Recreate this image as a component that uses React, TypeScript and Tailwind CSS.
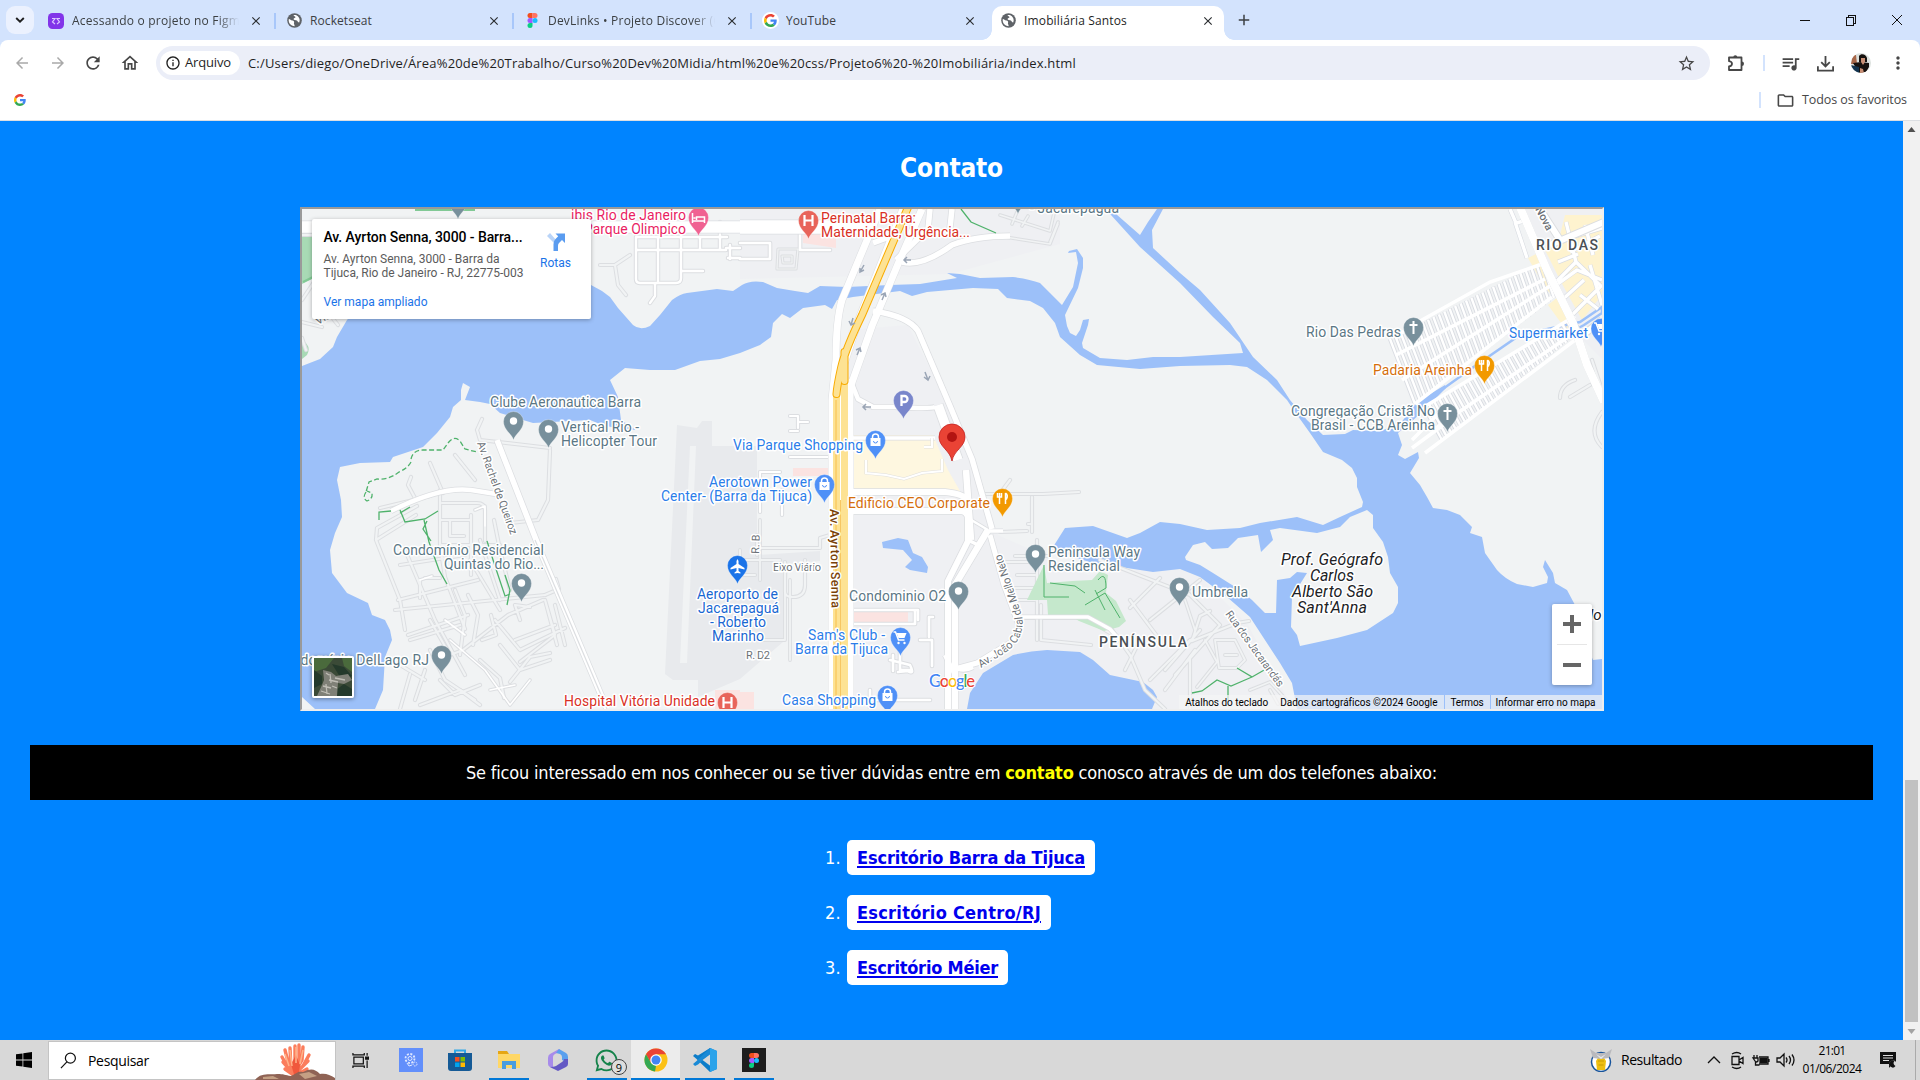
import React, { useLayoutEffect, useRef } from "react";
import {
  MdArrowBack, MdArrowForward, MdRefresh, MdOutlineHome, MdStarBorder,
  MdQueueMusic, MdMoreVert, MdOutlineFolder, MdInfoOutline, MdClose, MdAdd,
} from "react-icons/md";
import { FaWhatsapp } from "react-icons/fa";

/* Text whose letter spacing is tuned so that it spans exactly w pixels. */
function Fit({ w, className = "", children }: { w: number; className?: string; children: React.ReactNode }) {
  const ref = useRef<HTMLSpanElement>(null);
  useLayoutEffect(() => {
    const el = ref.current;
    if (!el) return;
    el.style.letterSpacing = "0px";
    const n = (el.textContent || "").length;
    el.style.letterSpacing = `${(w - el.getBoundingClientRect().width) / n}px`;
  }, [w]);
  return <span ref={ref} className={`inline-block whitespace-nowrap ${className}`}>{children}</span>;
}

const GoogleG = ({ className }: { className: string }) => (
  <svg viewBox="0 0 48 48" className={className}>
    <path fill="#EA4335" d="M24 9.5c3.54 0 6.71 1.22 9.21 3.6l6.85-6.85C35.9 2.38 30.47 0 24 0 14.62 0 6.51 5.38 2.56 13.22l7.98 6.19C12.43 13.72 17.74 9.5 24 9.5z" />
    <path fill="#4285F4" d="M46.98 24.55c0-1.57-.15-3.09-.38-4.55H24v9.02h12.94c-.58 2.96-2.26 5.48-4.78 7.18l7.73 6c4.51-4.18 7.09-10.36 7.09-17.65z" />
    <path fill="#FBBC05" d="M10.53 28.59c-.48-1.45-.76-2.99-.76-4.59s.27-3.14.76-4.59l-7.98-6.19C.92 16.46 0 20.12 0 24c0 3.88.92 7.54 2.56 10.78l7.97-6.19z" />
    <path fill="#34A853" d="M24 48c6.48 0 11.93-2.13 15.89-5.81l-7.73-6c-2.15 1.45-4.92 2.3-8.16 2.3-6.26 0-11.57-4.22-13.47-9.91l-7.98 6.19C6.51 42.62 14.62 48 24 48z" />
  </svg>
);

const FigmaLogo = ({ className }: { className: string }) => (
  <svg viewBox="0 0 12 18" className={className}>
    <path fill="#f24e1e" d="M3 0h3v6H3a3 3 0 0 1 0-6z" />
    <path fill="#ff7262" d="M6 0h3a3 3 0 0 1 0 6H6z" />
    <path fill="#a259ff" d="M3 6h3v6H3a3 3 0 0 1 0-6z" />
    <circle fill="#1abcfe" cx="9" cy="9" r="3" />
    <path fill="#0acf83" d="M3 12h3v3a3 3 0 1 1-3-3z" />
  </svg>
);

const Rocket = () => (
  <svg viewBox="0 0 16 16" className="size-4">
    <rect width="16" height="16" rx="4.500" fill="#8234e9" />
    <path d="M4 5.500h3L4.500 9l2.500 2M12 5.500H9L11.500 9 9 11" fill="none" stroke="#dcc8ff" strokeWidth="1.200" />
  </svg>
);

const Globe = () => (
  <svg viewBox="0 0 16 16" className="size-[15px]">
    <circle cx="8" cy="8" r="7.800" fill="#5f6368" />
    <path d="M2 6.500c1.500 0 2 1.500 3.500 1.500S8 9 7.500 10.500 8.500 12 8 14a6 6 0 0 1-6-7.500zM7 2.200c0 1.500 2 1 2 2.300S7 5 7 6.500s2.500 1 3.500 1.500 1 2 2.500 2.200A6 6 0 0 0 9.500 2.200z" fill="#fff" />
  </svg>
);

type TabInfo = { title: string; w: number; icon: React.ReactNode; active?: boolean; fade?: boolean; sep?: boolean };
const tabs: TabInfo[] = [
  { title: "Acessando o projeto no Figma", w: 175, icon: <Rocket />, fade: true, sep: true },
  { title: "Rocketseat", w: 62, icon: <Globe />, sep: true },
  { title: "DevLinks • Projeto Discover (C", w: 173, icon: <FigmaLogo className="h-[15px] w-[11px]" />, fade: true, sep: true },
  { title: "YouTube", w: 50, icon: <span className="flex size-[17px] items-center justify-center rounded-full bg-white"><GoogleG className="size-[13px]" /></span> },
  { title: "Imobiliária Santos", w: 103, icon: <Globe />, active: true },
];

function Tab({ t }: { t: TabInfo }) {
  return (
    <div className={`relative flex h-[34px] items-center pb-[6px] ${t.active ? "ml-[2px] w-[232px] rounded-t-[10px] bg-white pt-px" : "w-[238px] pt-px"}`}>
      {t.active && (
        <>
          <span className="absolute bottom-0 -left-[10px] size-[10px] bg-[radial-gradient(circle_at_0_0,transparent_9.5px,#fff_10px)]" />
          <span className="absolute -right-[10px] bottom-0 size-[10px] bg-[radial-gradient(circle_at_100%_0,transparent_9.5px,#fff_10px)]" />
        </>
      )}
      <span className={`flex w-[18px] shrink-0 justify-center ${t.active ? "ml-[7px]" : "ml-[9px]"}`}>{t.icon}</span>
      <span className={`ml-[7px] w-[167px] shrink-0 overflow-hidden text-[12px] leading-[20px] ${t.active ? "text-[#1f1f1f]" : "text-[#3c4043]"} ${t.fade ? "[mask-image:linear-gradient(90deg,#000_145px,transparent_167px)]" : ""}`}>
        <Fit w={t.w}>{t.title}</Fit>
      </span>
      <MdClose className="ml-[10px] size-[14px] shrink-0 text-[#2b2e31]" />
      {t.sep && <span className="ml-[11px] h-4 w-[2px] shrink-0 bg-[#a8c7fa]" />}
    </div>
  );
}

function Chrome() {
  return (
    <header className="h-[121px] bg-[#d3e3fd] font-['Open_Sans',sans-serif]">
      <div className="flex h-10 items-end">
        <div className="mb-[6px] ml-[6px] flex h-7 w-7 items-center justify-center rounded-[9px] bg-[#ebf1fe]">
          <svg viewBox="0 0 10 6" className="h-[6px] w-[10px]"><path d="M1.200 1l3.800 3.600L8.800 1" fill="none" stroke="#1f1f1f" strokeWidth="1.900" /></svg>
        </div>
        <div className="w-1" />
        {tabs.map((t) => <Tab key={t.title} t={t} />)}
        <MdAdd className="mb-[11px] ml-[11px] size-[18px] text-[#3c4043]" />
        <div className="flex-1" />
        <svg className="mr-[16px] mb-[12px] h-[16px] w-[104px]" viewBox="0 0 104 16" fill="none" stroke="#111" shapeRendering="crispEdges">
          <path d="M0 8.500h10M46.500 5.500h7v8h-7zM48.500 5.500v-2h7v8h-2" />
          <path d="M92 3l10 10M102 3l-10 10" shapeRendering="auto" />
        </svg>
      </div>
      <div className="flex h-[81px] flex-col rounded-t-[8px] border-b border-[#dcdfe3] bg-white">
        <div className="flex h-[46px] items-center text-[#474747]">
          <MdArrowBack className="ml-[13px] size-[18px] text-[#a9a9a9]" />
          <MdArrowForward className="ml-[18px] size-[18px] text-[#a9a9a9]" />
          <MdRefresh className="ml-[16px] size-[20px]" />
          <MdOutlineHome className="ml-[17px] size-[20px]" />
          <div className="ml-4 flex h-[34px] w-[1554px] items-center rounded-full bg-[#ebeef8] pl-[4px]">
            <div className="flex h-6 w-[80px] items-center rounded-full bg-white pl-[5px] text-[13px] text-[#1f1f1f]">
              <MdInfoOutline className="mr-[4px] size-4" />
              <Fit w={46}>Arquivo</Fit>
            </div>
            <Fit w={828} className="ml-[8px] text-[13px] leading-5 text-[#1f1f1f]">
              C:/Users/diego/OneDrive/Área%20de%20Trabalho/Curso%20Dev%20Midia/html%20e%20css/Projeto6%20-%20Imobiliária/index.html
            </Fit>
            <div className="flex-1" />
            <MdStarBorder className="mr-[14px] size-[19px]" />
          </div>
          <svg viewBox="0 0 18 18" className="ml-[17px] size-[18px]" fill="none" stroke="currentColor" strokeWidth="1.800" strokeLinejoin="round">
            <path d="M2 3.500h12.500v12.500H2v-3.500q3-.5 3-2.700T2 7.200z" />
            <path d="M6.300 3.300a2 2 0 0 1 4 0zM14.800 7.500a2.200 2.200 0 0 1 0 4.400z" fill="currentColor" stroke="none" />
          </svg>
          <span className="ml-[18px] h-4 w-[2px] bg-[#d3e3fd]" />
          <MdQueueMusic className="ml-[15px] size-[21px]" />
          <svg viewBox="0 0 20 20" className="ml-[15px] size-[19px]" fill="none" stroke="currentColor" strokeWidth="1.900">
            <path d="M10 2v11M5.500 8.500l4.500 4.500 4.500-4.500M2 13v4.500h16V13" />
          </svg>
          <svg viewBox="0 0 20 20" className="ml-[16px] size-5">
            <clipPath id="av"><circle cx="10" cy="10" r="10" /></clipPath>
            <g clipPath="url(#av)">
              <path fill="#dde2df" d="M0 0h20v20H0z" />
              <path fill="#a8684a" d="M1 2h4l1 9H0z" />
              <path fill="#17120f" d="M8 3c2-3 7-2 8 2v4H8zM2 10l8-1 8 1v4l-3 5-7 1z" />
              <path fill="#c98f75" d="M10 5h4v4l-2 3-2-3zM9 15l3 1 1 4H9z" />
              <path fill="#123450" d="M0 12l8 2v6H0z" />
            </g>
          </svg>
          <MdMoreVert className="ml-[17px] size-[20px]" />
        </div>
        <div className="flex flex-1 items-center pb-[6px]">
          <GoogleG className="ml-[14px] size-[12px]" />
          <div className="flex-1" />
          <span className="h-4 w-[2px] bg-[#d3e3fd]" />
          <MdOutlineFolder className="ml-[15px] size-[19px] text-[#474747]" />
          <Fit w={105} className="mr-[13px] ml-[7px] text-[12.500px] text-[#474747]">Todos os favoritos</Fit>
        </div>
      </div>
    </header>
  );
}

/* ---------- map ---------- */

const waterMain =
  "M302 366L320 359 333 347 337 337 347 320 380 285 420 262 500 265 560 262 591 285 602 291 610 297 618 308 633 325Q640 331 650 326L660 315 672 300Q680 294 687 293L717 289 733 291 742 285Q750 280 763 282L777 288 795 291 808 293 820 286 847 287 890 285 920 284 957 278 947 273 960 274 980 278 1013 277Q1030 279 1040 283L1050 293 1062 305 1073 287 1078 263 1076 252 1068 253 1069 251 1077 249 1083 258 1083 268 1078 288 1065 315 1067 326 1070 333 1076 336 1080 330 1083 320 1089 319 1088 325 1082 343 1083 348 1100 358 1127 360 1153 357 1180 357 1243 353 1240 343 1213 317 1180 283 1140 247 1111 215 1100 209 1116 214 1140 235 1148 222 1157 209 1163 209 1152 230 1153 248 1180 273 1200 290 1230 323 1253 357 1277 380 1290 400 1307 420 1323 435 1345 434 1353 430 1380 431 1400 424 1417 402 1445 385 1446 388 1424 410 1410 423 1398 433 1402 445 1398 455 1405 459 1418 452 1419 458 1410 473 1420 485 1427 497 1433 508 1447 510 1460 515 1472 527 1470 533 1482 537 1485 553 1497 570Q1505 579 1517 584L1533 587 1547 583 1548 577 1543 567 1545 560 1553 573 1555 583 1567 590 1575 605 1580 630 1593 660 1602 659V709H1297L1292 683 1280 663 1263 637 1250 617 1227 597 1200 577 1180 569 1153 572 1127 568 1093 563 1073 557 1053 547 1065 528 1093 526 1127 538 1140 533 1160 522 1180 524 1207 530 1240 528 1260 523 1297 517 1323 525 1340 517 1362 507 1363 502 1357 487 1357 478 1352 468 1342 460 1323 452 1310 433 1295 412 1287 400 1267 380 1247 367 1230 365 1180 366 1140 369 1097 365 1080 355 1060 337 1055 323 1043 308 1030 301 1007 298 998 289 973 288 927 292 912 296 900 291 853 297 837 300 832 309 825 305 803 308 790 318 782 314 773 323 771 337 760 345 740 353 720 359 700 361 675 370 650 370 625 368 610 380 618 397 621 420 636 430 625 429 605 426 590 420 533 423 500 413 490 404 480 402 465 400 470 387 463 383 461 390 461 400 453 407 450 417 437 433 423 447 393 457 390 462 360 463 340 467 337 480 341 500 342 517 335 533 330 550 332 573 347 593 368 603 372 615 385 620 390 630 392 640 385 657 383 690 375 709H315L302 697Z";
const island =
  "M1185 557L1193 545 1205 542 1212 549 1228 548 1238 538 1258 535 1261 552 1273 540 1270 530 1280 528 1317 533 1340 527 1350 517 1367 510 1373 515 1373 528 1383 542 1388 557 1390 573 1398 587 1398 603 1393 613 1367 630 1337 638 1300 646 1297 635 1291 627 1292 597 1307 573 1297 572 1290 578 1277 580 1276 613 1265 613 1252 600 1240 590 1213 573 1200 565 1186 560Z";

/* minor streets as [path, width, fill] */
const W = "#fff";
const G = "#f1f3f4";
const minor: [string, number, string][] = [
  ["M600 265h15l15-10M615 265l3 20 8 10M477 430l5-11M477 430l3 10 70 8M550 450l-2 50-10 20-28 3", 3, G],
  ["M636 237v42q0 4 4 4h36q5 0 5-5v-55M658 237v44M681 250h45M637 250h44M637 237h90M700 237v13M720 222v28M681 271h22M655 284v12l-5 7M726 248h14M728 258h12M730 245v14", 3.2, W],
  ["M778 249h20l-2 20h-19zM782 256h10v7h-9z", 2, G],
  ["M800 220v30h30M740 243h30v16h-30", 3.4, W],
  ["M1000 215l50 16 5-22M1050 242l8-20M1017 212l-5 12M1028 216l-6 10M1005 237l45 7 8-20", 2.4, G],
  ["M455 455l20 25M430 463l13 30M380 508l50-12M416 500l-8-15 3-8", 3, G],
  ["M376 540l40-25M440 490v55l5 32 20 52M376 540l24 60 5 30M376 540l1-12 40-22M442 503h35q8 0 8 8v30M440 520h30M440 545h60M471 515v60M450 521v15h14M494 520l5 25M405 550l30 70 30 55", 3, G],
  ["M395 610l150-15M398 600l80-20M408 635l60-20M400 565l65-10M470 560l30 50M455 590l10 25-5 40M480 540l20 60M500 550l10 40M420 580v18M425 578h15M430 620l20 35M410 640l50-15M430 650l15 30 30 20", 3, G],
  ["M450 655l13-5 45-35 35-15M468 595l10 20-5 30M482 640l14-5-5-20M520 620l-5-15 15 2M480 660l20 18 4 20M495 620l25 30 45-22M500 645l20 25 30-10M515 640l40-15M510 682l20-25 20-4M400 665l25 15M415 700l10-30M440 680l15 15 25-10M420 705l40-15 20 15M400 709l10-35M545 600l10 35-35 27M545 600l12 45M545 595l14-6-3-10M555 605l10 40", 3, G],
  ["M475 510l10-4v20M450 640l35 30 25 35 20-25M445 620l20 15M420 580l12-4M490 690l25-5", 2.4, W],
  ["M302 235h60M302 300l30-45M302 322l20 5M306 350l-4-12M330 315l8 10", 3, G],
  ["M790 416h8v12M798 422h10M790 431h8M790 457h40M780 472h-20v40M782 490v25", 3, W],
  ["M760 548h60M745 560h35M755 575h-15M757 535v20M785 562v30q0 5 8 5 12 0 12-12v-25M820 548v-10l10-3", 3, G],
  ["M760 520v60M740 550v25M740 640h45v-70M790 660v-80", 2.6, G],
  ["M850 610h68v10M850 624h65v-14M900 640v30h10M920 640h12v26M933 617h-4v20M890 660l20 5q5 10-2 6l-10 1M850 700h80M870 690v18M893 655v16", 3.4, W],
  ["M985 494h58l36-2M1010 480l-12 16M1032 497v35M1030 524h-2M1000 532l27-1M1015 556h35M1000 562h35M1037 540v100M1035 575h-18M1035 588h-20M1035 600h-18M1020 618h65l25 15M1041 605v35l50 5M1085 615l20 5 25 35 15 35 20 19", 3, G],
  ["M1100 560l90 35M1160 578l-30 30M1180 585l40 40-45 50M1130 600l30 40M1150 620l50-40M1140 640l-15 30M1165 670l35-40M1192 641l45-18 12-2M1192 641l8-25 10-5M1150 680l40-40M1165 690l30-40M1190 709v-50", 3, G],
  ["M1185 600l10 30M1205 640l12 22-20 25M1215 640h20l10 20-8 8h-18zM1225 655h12M1250 690l20-8 20 22M1270 690l8 14", 2.6, G],
  ["M1575 380q-15 5-15 18M1570 397l20-12M1602 412q-15 20 0 35M1592 360l10 30", 3, G],
];

const major: [string, number][] = [
  ["M302 227H740", 12],
  ["M740 227H870", 14],
  ["M497 440l45 115 65 154", 6],
  ["M391 511q50-25 80-21l25 4", 5],
  ["M952 209l-3 28M930 209l-2 20-32 31M873 243l27-10", 6],
  ["M1010 236q-35 0-58 9-30 22-50 17", 6],
  ["M873 311q35 5 45 20l32 75 22 53 20 70", 6],
  ["M935 407q-5 2-40 0h-22l-15-8-8-20", 5],
  ["M938 405l20 55", 10],
  ["M850 492h95q20 2 25 10M850 511h110q8 0 8 8v22l-20 40v128", 6.5],
  ["M966 470l5 70M988 530l-33 55v124", 7],
  ["M968 540l10 5 8-10M988 531l15 0M850 438h85M848 432v12", 4],
  ["M968 518l20 12", 3],
  ["M990 535l14 50 14 38q2 10-5 18l-36 22-22 6", 5.500],
  ["M953 665q8 8 20 2M945 655l10 20", 5],
  ["M1018 617h70l22 12 16 18", 4],
];

const highwaySides =
  "M880 209L842 300q-6 20-6 60l-4 40v310M922 209l-24 55-26 62-22 62v320M903 209l-44 110-20 60";

const park = "M1044 565l3 18 25-2 20-1 8-9 8 4-2 18 10 8 10 20-7 6-15 4-25-10-10-6h-21l-1-15h-20z";
const marketStreets = "M1566 222l10 40-20 20M1576 262l26 25M1562 240l40-12M1570 252l30-16M1558 262l20-8M1552 288l25-18 25 10M1562 300l22-20M1585 225l8 30M1572 315l30-30M1590 265l12 40M1580 295l18 14";

type Kind = "dot" | "cross" | "bag" | "cart" | "fork" | "H" | "P" | "plane" | "bed";
const pins: [number, number, string, Kind][] = [
  [458, 219, "#78909c", "dot"], [698.5, 236, "#f06292", "bed"], [808.5, 239, "#e8645a", "H"], [1018, 214, "#78909c", "dot"],
  [513.5, 440, "#78909c", "dot"], [548.5, 448, "#78909c", "dot"], [903.5, 419, "#7986cb", "P"], [875.5, 459, "#4f90f7", "bag"],
  [824.5, 503, "#4f90f7", "bag"], [1002.5, 517, "#f29900", "fork"], [737.5, 584, "#1a73e8", "plane"], [521.5, 602, "#78909c", "dot"],
  [441.5, 674, "#78909c", "dot"], [1035.5, 573, "#78909c", "dot"], [958.5, 610, "#78909c", "dot"], [1179.5, 606, "#78909c", "dot"],
  [900.5, 656, "#4f90f7", "cart"], [887.5, 714, "#4f90f7", "bag"], [727.5, 721, "#e8645a", "H"], [1413.5, 346, "#78909c", "cross"],
  [1484.5, 384, "#f29900", "fork"], [1447.5, 432, "#78909c", "cross"], [1601, 347, "#4f90f7", "cart"],
];

function Glyph({ k }: { k: Kind }) {
  const s = { fill: "none", stroke: "#fff", strokeWidth: 1.5 } as const;
  switch (k) {
    case "dot": return <circle cy="-19" r="3.700" fill="#fff" />;
    case "cross": return <path d="M0-25v13M-4-21h8" {...s} strokeWidth={2} />;
    case "bag": return <><path d="M-5-21H5v8H-5z" fill="#fff" /><path d="M-3-21v-1a3 3 0 0 1 6 0v1" {...s} /><path d="M-2-18a2 2 0 0 0 4 0" fill="none" stroke="#4f90f7" /></>;
    case "cart": return <><path d="M-7-24h2l3 8h6" {...s} /><path d="M-4-23H6l-2 5h-6z" fill="#fff" /><circle cx="-2" cy="-13" r="1.200" fill="#fff" /><circle cx="4" cy="-13" r="1.200" fill="#fff" /></>;
    case "fork": return <path d="M-3-24v11M-5-24v4h4v-4M3-24v11M3-24q3 2 1 6H3" {...s} />;
    case "H": return <path d="M-4-24v11M4-24v11M-4-18.500H4" {...s} strokeWidth={2.200} />;
    case "P": return <path d="M-2-13v-10H1a2.700 2.700 0 0 1 0 6H-2" {...s} strokeWidth={2.300} />;
    case "plane": return <path d="M0-25l1 2v3l6 4v1.500L1-16v3l2 1.500v1L0-11l-3 .5v-1L-1-13v-3l-6 1.500V-16l6-4v-3z" fill="#fff" />;
    case "bed": return <path d="M-6-23v10M-6-15H6M6-13v-6H-2v3M-5-18h2" {...s} />;
  }
}

const slate = "#5b7785";
const blue = "#2b7de9";
/* text, left, baseline, width, colour, size */
const labels: [string, number, number, number, string, number?][] = [
  ["Clube Aeronautica Barra", 490, 407, 151, slate],
  ["Vertical Rio -", 561, 432, 78, slate], ["Helicopter Tour", 561, 446, 96, slate],
  ["Perinatal Barra:", 821, 223, 95, "#d93025"], ["Maternidade, Urgência...", 821, 237, 149, "#d93025"],
  ["ibis Rio de Janeiro", 571, 220, 115, "#e91e63"], ["Parque Olimpico", 584, 234, 102, "#e91e63"],
  ["- Jacarepaguá", 1030, 213, 89, slate],
  ["Rio Das Pedras", 1306, 337, 95, slate], ["Supermarket", 1509, 338, 79, blue],
  ["Padaria Areinha", 1373, 375, 99, "#d56e0c"],
  ["Congregação Cristã No", 1291, 416, 144, slate], ["Brasil - CCB Areinha", 1311, 430, 124, slate],
  ["Via Parque Shopping", 733, 450, 130, blue],
  ["Aerotown Power", 709, 487, 103, blue], ["Center- (Barra da Tijuca)", 661, 501, 151, blue],
  ["Edificio CEO Corporate", 848, 508, 142, "#d56e0c"],
  ["Condomínio Residencial", 393, 555, 151, slate], ["Quintas do Rio...", 444, 569, 100, slate],
  ["Condomínio DelLago RJ", 275, 665, 154, slate],
  ["Aeroporto de", 697, 599, 81, "#1967d2"], ["Jacarepaguá", 698, 613, 81, "#1967d2"], ["- Roberto", 710, 627, 56, "#1967d2"], ["Marinho", 712, 641, 52, "#1967d2"],
  ["Condominio O2", 849, 601, 97, slate],
  ["Sam's Club -", 808, 640, 77, blue], ["Barra da Tijuca", 795, 654, 93, blue],
  ["Casa Shopping", 782, 705, 94, blue], ["Hospital Vitória Unidade", 564, 706, 151, "#d93025"],
  ["Peninsula Way", 1048, 557, 92, slate], ["Residencial", 1048, 571, 72, slate], ["Umbrella", 1192, 597, 56, slate],
  ["Eixo Viário", 773, 571, 48, "#6b7177", 11], ["R. D2", 746, 659, 24, "#6b7177", 11],
];

const lerp = (a: number[], b: number[], t: number) => [a[0] + (b[0] - a[0]) * t, a[1] + (b[1] - a[1]) * t];
function hatch(a: number[], b: number[], c: number[], d: number[], n: number) {
  let out = "";
  for (let i = 0; i <= n; i++) {
    const p = lerp(a, b, i / n), q = lerp(c, d, i / n);
    out += `M${p[0].toFixed(1)} ${p[1].toFixed(1)}L${q[0].toFixed(1)} ${q[1].toFixed(1)}`;
  }
  return out;
}
const gridUpper = hatch([1390, 339], [1542, 262], [1415, 404], [1554, 298], 28);
const gridLower = hatch([1424, 407], [1572, 318], [1442, 440], [1580, 332], 30);

function MapArt() {
  return (
    <svg viewBox="302 209 1300 500" className="absolute inset-0 h-[500px] w-[1300px] font-[Roboto,sans-serif]">
      <rect x="302" y="209" width="1300" height="500" fill="#f1f3f4" />
      <path d="M740 209h320v35l-110 30-210 5zM848 330l60-5 60 120 30 90 90 40 100-10 60 60 45 84H848zM1520 209h82v150l-30-30z" fill="#eff0f3" />
      <path d="M677 425l20 3 5-7h10v25h45v109l63-4v10l-32 3-5 78-43 37-42 18v-17h-25l-8-6z" fill="#e8eaed" />
      <path d="M690 446h6l-9 217h-7z" fill="#f1f3f4" />
      <path d="M302 229h10v50l-10 5zM302 340q10 6 5 15l-5 4z" fill="#a8dab5" />
      <path d="M303 282l10-5M415 210h60" stroke="#81c995" strokeWidth="2" />
      <path d="M848 435h85l15 35 12 21H855l-7-8z" fill="#fef7e0" />
      <path d="M1528 258l10-5 12 20 5 25-10-10zM1565 215l37 0v80l-20 25-22-40-15-30 15-15zM1548 305l10-8 18 35-12-5z" fill="#fef3cf" />
      <path d="M803 230h33v18l-33-5zM793 468h35v8h-35zM848 612h60v12h-60zM740 692h14v17h-14zM715 690h25v19h-25z" fill="#fbe3e1" />
      <path d={waterMain} fill="#9cc0f9" />
      <path d={island} fill="#f1f3f4" />
      <path d="M967 709L970 693 983 673 1013 655Q1030 651 1047 650L1080 652 1093 660 1110 675 1143 682 1153 690 1157 697 1152 709Z" fill="#9cc0f9" />
      <path d="M882 542L898 538 908 540 913 553 922 557 928 567 927 573 910 570 905 567 912 560 903 550 883 548Z" fill="#9cc0f9" />
      <path d="M1440 391L1475 366 1520 335 1580 322 1602 307V313L1584 325 1560 338" fill="none" stroke="#9cc0f9" strokeWidth="2.500" />

      {minor.map(([d, w], i) => <path key={i} d={d} fill="none" stroke="#dcdee1" strokeWidth={w + 1.200} strokeLinecap="round" strokeLinejoin="round" />)}
      {minor.map(([d, w, c], i) => <path key={i} d={d} fill="none" stroke={c} strokeWidth={w - 0.800} strokeLinecap="round" strokeLinejoin="round" />)}
      <path d={park} fill="#c5e8cc" />
      <path d="M1044 565v32h25M1050 583l25 3 10 7M1085 605l20-12 15 25M1095 590l10 20M1098 580q8-10 8 8l-10 6" fill="none" stroke="#4fb26b" />

      <path d={gridUpper + gridLower} stroke="#d9dce2" strokeWidth="4.200" />
      <path d={gridUpper + gridLower} stroke="#fff" strokeWidth="2.400" />
      <path d="M1395 337L1422 320 1490 282 1542 264M1396 355L1545 279M1402 380L1550 286M1415 404L1552 297M1424 407L1575 316M1433 430L1578 330M1425 453L1583 334M1412 440L1440 412M1412 448L1450 420" fill="none" stroke="#fff" strokeWidth="3.500" />

      <path d={marketStreets + "M1515 222l12 36M1510 209l6 14 8-2"} fill="none" stroke="#d9dce2" strokeWidth="4.600" strokeLinejoin="round" />
      <path d={marketStreets + "M1515 222l12 36M1510 209l6 14 8-2"} fill="none" stroke="#fff" strokeWidth="3.400" strokeLinejoin="round" />
      <path d="M1519 205L1547 270 1573 323 1587 365 1604 402M1560 240L1540 209M1550 245L1604 222M1583 335l19-15" fill="none" stroke="#dcdee1" strokeWidth="8" />
      <path d="M1519 205L1547 270 1573 323 1587 365 1604 402" fill="none" stroke="#fff" strokeWidth="8" />
      <path d="M1560 240L1540 209M1550 245L1604 222M1583 335l19-15" fill="none" stroke="#fff" strokeWidth="6" />

      {major.map(([d, w], i) => <path key={i} d={d} fill="none" stroke="#dcdee1" strokeWidth={w + 1} strokeLinejoin="round" />)}
      <path d={highwaySides} fill="none" stroke="#dcdee1" strokeWidth="8" />
      {major.map(([d, w], i) => <path key={i} d={d} fill="none" stroke="#fff" strokeWidth={w - 0.500} strokeLinejoin="round" />)}
      <path d={highwaySides} fill="none" stroke="#fff" strokeWidth="7" />
      <path d="M535 540l72 169" stroke="#dcdee1" strokeWidth="1.200" />
      <path d="M866 460v13l20 2 18 4 18-6 20-2v-12M932 438v9h-8M848 492h0" fill="none" stroke="#e0dfdc" strokeWidth="3" />
      <path d="M866 460v13l20 2 18 4 18-6 20-2v-12M932 438v9h-8" fill="none" stroke="#fff" strokeWidth="2" />

      <path d="M840 395V709" stroke="#fff" strokeWidth="16" />
      <path d="M836.500 395V709M844.500 378V709" fill="none" stroke="#fde293" strokeWidth="7" />
      <path d="M840.500 500v209M836 400v309" fill="none" stroke="#f5b83a" strokeWidth="0.800" />
      <path d="M909 205L862 315Q845 350 841 368T836.500 394M844.500 352V381" fill="none" stroke="#f9ab00" strokeWidth="8" strokeLinecap="round" />
      <path d="M909 205L862 315Q845 350 841 368T836.500 394M844.500 352V381" fill="none" stroke="#fde293" strokeWidth="6" strokeLinecap="round" />

      <g fill="none" stroke="#9aa5b5" strokeWidth="1.500">
        <path d="M911 260h-7m3-3l-3 3 3 3M864 265l-4 7m0-4l0 4 4-2M882 300l3-7m-4 2l4-2 1 4M853 318l-2 7m-2-4l2 4 4-2M857 355l3-7m-4 2l4-2 1 4M925 372l3 8m-4-3l4 3 2-4M871 407h-8m3-3l-3 3 3 3" />
      </g>
      <g fill="none" stroke="#4fb26b" strokeWidth="1.300">
        <path strokeDasharray="5 2.500" d="M411 459q2-9 12-9h20l5-7q6-8 12-2l5 8 12 3M411 462q-3 6-12 10-10 8-22 7l-8 3-3 10M366 492q-4 6 1 9 6-2 5-8l-5-2" />
        <path d="M379 520v-8l12-1M400 513l10-6M400 510l5 12 20-3 13-8M424 520l5 22 10 28 8 14M427 521l-4 8 8 12M487 541l8 25 10 30 5-2M505 575l5 15-3 15M961 209l10 13 25 11" />
        <path d="M1192 693l10-2 15-11 14 6 14-6 7-3-15-9M1252 677l14-8M1228 686v14" />
      </g>

      {pins.map(([x, y, c, k], i) => (
        <g key={i} transform={`translate(${x} ${y})`}>
          <path d="M0 0C-1.500-6-10-10-10-18.500A10 10 0 0 1 10-18.500C10-10 1.500-6 0 0Z" fill={c} stroke="#fff" strokeOpacity="0.500" strokeWidth="0.600" />
          <Glyph k={k} />
        </g>
      ))}
      <g transform="translate(952 461)">
        <path d="M0 0C-2-11-13-14-13-24A13 13 0 0 1 13-24C13-14 2-11 0 0Z" fill="#ea4335" stroke="#c5221f" strokeWidth="0.800" />
        <circle cy="-24" r="5" fill="#b31412" />
      </g>

      <g stroke="#fff" strokeWidth="3" strokeLinejoin="round" paintOrder="stroke">
        {labels.map(([t, x, y, w, c, s]) => (
          <text key={t} x={x} y={y} textLength={w} fontSize={s ?? 14} fill={c}>{t}</text>
        ))}
        <g fill="#4a4f54" fontSize="14" fontWeight="500">
          <text x="1536" y="250" textLength="62">RIO DAS</text>
          <text x="1099" y="647" textLength="88">PENÍNSULA</text>
        </g>
        <g fill="#202124" fontSize="16" fontStyle="italic">
          <text x="1281" y="565" textLength="102">Prof. Geógrafo</text>
          <text x="1310" y="581" textLength="44">Carlos</text>
          <text x="1292" y="597" textLength="81">Alberto São</text>
          <text x="1297" y="613" textLength="70">Sant'Anna</text>
          <text x="1585" y="620" fontSize="15">do</text>
        </g>
        <g fill="#6b7177" fontSize="11">
          <text transform="translate(759 554) rotate(-88)">R. B</text>
          <text transform="translate(477 443) rotate(70)" textLength="98">Av. Rachel de Queiroz</text>
          <text transform="translate(318 325) rotate(-30)">Via</text>
          <text transform="translate(1225 614) rotate(54)" textLength="91">Rua dos Jacarandás</text>
          <text transform="translate(1535 209) rotate(62)" fontWeight="500">Nova</text>
          <path id="joao" d="M981 668L1003 654Q1026 640 1022 616L1012 585 1000 550" fill="none" stroke="none" />
          <text><textPath href="#joao" textLength="137">Av. João Cabral de Mello Neto</textPath></text>
        </g>
        <text transform="translate(830 509) rotate(89)" textLength="99" fontSize="12.500" fontWeight="500" fill="#7a4208">Av. Ayrton Senna</text>
        <text x="929" y="687" textLength="46" fontSize="16.500" strokeWidth="2" className="font-[Lato,sans-serif] font-medium">
          <tspan fill="#4285f4">G</tspan><tspan fill="#ea4335">o</tspan><tspan fill="#fbbc04">o</tspan><tspan fill="#4285f4">g</tspan><tspan fill="#34a853">l</tspan><tspan fill="#ea4335">e</tspan>
        </text>
      </g>
    </svg>
  );
}

function MapFrame() {
  return (
    <div className="relative mx-auto h-[504px] w-[1304px] overflow-hidden border-2 border-t-[#9a9a9a] border-r-[#eee] border-b-[#eee] border-l-[#9a9a9a] font-[Roboto,sans-serif]">
      <MapArt />
      <div className="absolute top-[10px] left-[10px] flex h-[100px] w-[279px] rounded-[2px] bg-white shadow-[0_1px_4px_rgba(0,0,0,0.3)]">
        <div className="flex w-[217px] flex-col items-start pt-[10px] pl-3 text-[12px] leading-[14px]">
          <Fit w={199} className="text-[14px] leading-[17px] font-medium text-black">Av. Ayrton Senna, 3000 - Barra...</Fit>
          <Fit w={176} className="mt-[6px] text-[#5b5b5b]">Av. Ayrton Senna, 3000 - Barra da</Fit>
          <Fit w={200} className="text-[#5b5b5b]">Tijuca, Rio de Janeiro - RJ, 22775-003</Fit>
          <Fit w={104} className="mt-[15px] text-[#1a73e8]">Ver mapa ampliado</Fit>
        </div>
        <div className="flex w-[54px] flex-col items-center pt-[13px]">
          <svg viewBox="0 0 20 20" className="size-5">
            <path d="M1 4l3-3 6 7v5z" fill="#b9d4f8" />
            <path d="M7.500 19v-7q0-3 2-5l2.700-2.700L9.500 1.500H19V11l-3-3-3 3q-1 1-1 3v5z" fill="#5a9cf0" />
          </svg>
          <Fit w={31} className="mt-[4px] text-[12px] leading-[14px] text-[#1a73e8]">Rotas</Fit>
        </div>
      </div>
      <svg viewBox="0 0 42 42" className="absolute bottom-[11px] left-[10px] size-[42px] rounded-[2px] shadow-[0_1px_4px_rgba(0,0,0,0.4)]">
        <path d="M0 0h42v42H0z" fill="#fff" />
        <path d="M2 2h38v38H2z" fill="#3b4a37" />
        <path d="M2 2h20l-8 10L2 16zM30 2h10v14l-8-6z" fill="#4a6a3c" />
        <path d="M24 34l8-6 8 5v7H25zM2 14l8 6v8l-8 4zM20 8l12 3 8 9-10 4z" fill="#24392b" />
        <path d="M11 14l8 2 5 4 12-2 4 6-8 4-6-1-1 13H5l5-11 2-5z" fill="#7f8077" />
        <path d="M14 17l3 2M17 24l9 2M11 30l8 2M9 35l9 3M18 18l1 9M14 28l1 10M23 22l10 2M20 30l5 2" stroke="#bfbdb5" strokeWidth="1.300" />
      </svg>
      <div className="absolute right-[10px] bottom-[24px] flex h-[81px] w-10 flex-col items-center rounded-[2px] bg-white text-[#666] shadow-[0_1px_4px_rgba(0,0,0,0.3)]">
        <svg viewBox="0 0 18 18" className="mt-[11px] size-[18px]"><path d="M7 0h4v7h7v4h-7v7H7v-7H0V7h7z" fill="#666" /></svg>
        <span className="mt-[11px] h-px w-[30px] bg-[#e6e6e6]" />
        <span className="mt-[18px] h-[4px] w-[18px] bg-[#666]" />
      </div>
      <div className="absolute right-0 bottom-0 flex h-[14px] text-[10px] leading-[15px] text-black">
        <div className="bg-[#f5f5f5]/70 px-[6px]"><Fit w={83}>Atalhos do teclado</Fit></div>
        <div className="bg-[#f5f5f5]/70 px-[6px]"><Fit w={157}>Dados cartográficos ©2024 Google</Fit></div>
        <div className="ml-px bg-[#f5f5f5]/70 px-[6px]"><Fit w={33}>Termos</Fit></div>
        <div className="ml-px bg-[#f5f5f5]/70 pr-[6px] pl-[5px]"><Fit w={100}>Informar erro no mapa</Fit></div>
      </div>
    </div>
  );
}

const offices: [string, number][] = [["Escritório Barra da Tijuca", 228], ["Escritório Centro/RJ", 184], ["Escritório Méier", 141]];

function Page() {
  return (
    <div className="flex h-[919px]">
      <main className="w-[1903px] bg-[#0084ff] px-[30px] pt-[29px] font-['DejaVu_Sans_Condensed','DejaVu_Sans',sans-serif] text-white">
        <h1 className="text-center text-[26px] leading-9 font-bold"><Fit w={103}>Contato</Fit></h1>
        <div className="mt-[21px]"><MapFrame /></div>
        <p className="mt-[34px] flex h-[55px] items-center justify-center bg-black text-[18px] leading-6">
          <Fit w={971}>
            Se ficou interessado em nos conhecer ou se tiver dúvidas entre em <b className="text-[#ffff00]">contato</b> conosco através de um dos telefones abaixo:
          </Fit>
        </p>
        <ol className="mt-10 ml-[795px] flex flex-col items-start gap-5">
          {offices.map(([name, w], i) => (
            <li key={name} className="flex items-center text-[18px] leading-6">
              <Fit w={16}>{i + 1}.</Fit>
              <a className="ml-[6px] flex h-[35px] items-center rounded-[5px] bg-white px-[10px] font-bold text-[#0000ee]">
                <Fit w={w} className="underline decoration-2 underline-offset-2">{name}</Fit>
              </a>
            </li>
          ))}
        </ol>
      </main>
      <div className="flex w-[17px] flex-col items-center bg-[#f1f1f1]">
        <svg viewBox="0 0 17 17" className="h-[17px]"><path d="M4.500 11h8l-4-5z" fill="#505050" /></svg>
        <div className="mt-[642px] h-[242px] w-[13px] bg-[#c1c1c1]" />
        <svg viewBox="0 0 17 17" className="mt-px h-[17px]"><path d="M4.500 6h8l-4 5z" fill="#a3a3a3" /></svg>
      </div>
    </div>
  );
}

function TaskApp({ children, open, active }: { children: React.ReactNode; open?: boolean; active?: boolean }) {
  return (
    <div className={`relative flex h-10 w-[49px] items-center justify-center ${active ? "bg-[#ececec]" : ""}`}>
      {children}
      {open && <span className={`absolute bottom-0 h-[2px] bg-[#0078d7] ${active ? "w-[49px]" : "w-10"}`} />}
    </div>
  );
}

function Taskbar() {
  return (
    <footer className="flex h-10 items-center bg-[#d8d8d8] font-['Open_Sans',sans-serif] text-black">
      <div className="flex w-12 justify-center">
        <svg viewBox="0 0 16 16" className="size-4"><path d="M0 2.300l6.500-.9v6.200H0zM7.300 1.300L16 0v7.600H7.300zM0 8.400h6.500v6.200L0 13.700zM7.300 8.400H16V16l-8.700-1.300z" /></svg>
      </div>
      <div className="flex h-[39px] w-[288px] items-center self-end border border-[#c4c4c4] bg-white">
        <svg viewBox="0 0 18 18" className="ml-[11px] size-[17px]" fill="none" stroke="#111" strokeWidth="1.300"><circle cx="11" cy="6.500" r="5.300" /><path d="M7.300 10.500L1 17" /></svg>
        <Fit w={61} className="ml-[11px] text-[14px] leading-5">Pesquisar</Fit>
        <div className="flex-1" />
        <svg viewBox="0 0 80 38" className="h-[38px] w-[80px]">
          <g fill="none" stroke="#fb7d5c" strokeWidth="3.400" strokeLinecap="round">
            <path d="M40 35V4M40 33L33 20 30 8M40 30L47 18 48 5M37 30L28 20M36 26L35 6M43 29L53 19M44 22L44 3M48 24l6-11M32 24l-5-9M40 34L30 27M40 34l12-7" />
          </g>
          <path d="M40 36l-4-14 5-9 4 10-2 13z" fill="#f0573c" />
          <path d="M35 8l2 16M48 8l-3 14M41 5v16M30 12l4 12" stroke="#ffb48a" strokeWidth="1.500" />
          <path d="M0 38c6-8 15-5 22-6 7 0 8 1 14 2 7-3 6-5 12-4 8-4 12-3 17 2 6-1 10 1 15 4v2z" fill="#8f6355" />
          <path d="M44 32l10-2 8 4-12 3zM8 35l10-1 6 3H8z" fill="#c4a084" />
        </svg>
      </div>
      <div className="flex w-[49px] justify-center">
        <svg viewBox="0 0 18 18" className="size-[17px]" fill="none" stroke="#111" strokeWidth="1.300"><path d="M2 5.500h10v7H2zM1 1v2h12V1M1 17v-2h12v2M16 1v3M16 9v8" /><path d="M14.500 5.500h3v2h-3z" fill="#111" /></svg>
      </div>
      <div className="w-px" />
      <TaskApp>
        <svg viewBox="0 0 24 24" className="size-6">
          <path fill="#628ffb" d="M0 0h24v24H0z" />
          <g fill="none" stroke="#dfe8ff"><circle cx="11" cy="10.500" r="4.500" strokeWidth="1.800" strokeDasharray="2 1.500" /><circle cx="11" cy="10.500" r="2" /><circle cx="16" cy="16" r="2" strokeDasharray="1.500 .8" /><path d="M8 15l2 3 3-1" /></g>
        </svg>
      </TaskApp>
      <TaskApp>
        <svg viewBox="0 0 24 24" className="size-6"><path d="M7 6V2.500h10V6" fill="none" stroke="#31a8e8" strokeWidth="2" /><path d="M0 5h24v15a3 3 0 0 1-3 3H3a3 3 0 0 1-3-3z" fill="#155a96" /><path d="M7 9h4.500v4.500H7z" fill="#f25022" /><path d="M12.500 9H17v4.500h-4.500z" fill="#7fba00" /><path d="M7 14.500h4.500V19H7z" fill="#00a4ef" /><path d="M12.500 14.500H17V19h-4.500z" fill="#ffb900" /></svg>
      </TaskApp>
      <TaskApp open>
        <svg viewBox="0 0 24 24" className="size-6"><path d="M1 3h9l2 3v14H1z" fill="#e6a614" /><path d="M1 6h22v14H1z" fill="#ffd766" /><path d="M5 13h14v8h-4v-4H9v4H5z" fill="#4a9de0" /></svg>
      </TaskApp>
      <TaskApp>
        <svg viewBox="0 0 24 24" className="size-6">
          <path d="M13 1L4 6Q2 7 2 10v6q0 2 2 3l4 2q-1-2-1-4V9q0-2 2-3l6-3z" fill="#a78bea" />
          <path d="M13 1l7 4q2 1 2 4v6l-6-3V9q0-2-2-3l-4-1z" fill="#5aa0ee" />
          <path d="M22 11v5q0 2-2 3l-8 4-8-4q4 0 6-1l6-4q2-1 2-3z" fill="#6459c4" />
          <path d="M9 9l3-2 3 2v4l-4 3-2-1z" fill="#d8d8d8" />
        </svg>
      </TaskApp>
      <TaskApp open>
        <FaWhatsapp className="size-[25px] text-[#15834b]" />
        <span className="absolute top-[19px] left-[29px] flex size-4 items-center justify-center rounded-full border border-[#444] bg-[#ddd] text-[11px] leading-none">9</span>
      </TaskApp>
      <TaskApp open active>
        <svg viewBox="0 0 48 48" className="size-6">
          <circle cx="24" cy="24" r="23" fill="#fbc116" />
          <path d="M4 12.500A23 23 0 0 1 44 12.500H24L14 30z" fill="#ea4335" />
          <path d="M4 12.500L14 30l10 6-2 11A23 23 0 0 1 4 12.500z" fill="#34a853" />
          <circle cx="24" cy="24" r="11.500" fill="#fff" /><circle cx="24" cy="24" r="9" fill="#4285f4" />
        </svg>
      </TaskApp>
      <TaskApp open>
        <svg viewBox="0 0 24 24" className="size-6"><path d="M17 0l7 3v18l-7 3L3 10.500 0 8l2-2 3 1.500z" fill="#0d7dc9" /><path d="M17 0l7 3v18l-7 3z" fill="#2ba3ea" /><path d="M17 6v12l-8-6zM0 16l2 2 3-1.500L17 6V0L3 13.500z" fill="#1a8ad6" /><path d="M17 6.500v11L9.500 12z" fill="#d8d8d8" /></svg>
      </TaskApp>
      <TaskApp open>
        <span className="flex size-6 items-center justify-center bg-[#1e1e1e]"><FigmaLogo className="h-[15px] w-[10px]" /></span>
      </TaskApp>
      <div className="flex-1" />
      <svg viewBox="0 0 24 24" className="size-6">
        <circle cx="12" cy="14" r="9.500" fill="#fff" stroke="#16539b" strokeWidth="1.500" />
        <path d="M12 5l5 8-1 9H8l-1-9z" fill="#eebf12" /><path d="M9 13h6M9.500 17h5" stroke="#c99b00" />
        <path d="M1 1l6 4h10l6-4-3 9-8 1-8-1z" fill="#b9b9bd" /><path d="M7 6l5 3 5-3-5 5z" fill="#e9e9ec" />
      </svg>
      <Fit w={61} className="ml-[8px] text-[14px] leading-5">Resultado</Fit>
      <svg viewBox="0 0 90 20" className="ml-[24px] h-5 w-[90px]" fill="none" stroke="#111" strokeWidth="1.300">
        <path d="M2 13l6-6 6 6" />
        <path d="M26 6.500h7v8h-7zM33 10l4-2.500v6L33 11M26 4q5-3 9 0M26 17q5 3 9 0" />
        <path d="M53 7h9v7h-9M48 5v3M51 5v3M47 8h5v3q-2 2-3 0zM49.500 12v3h4M63 9v3" /><path d="M54 8.500h7v4h-7z" fill="#111" />
        <path d="M71 8h3l4-4v12l-4-4h-3zM80 7.500q2 2.500 0 5M83 6q3 4 0 8M86 4.500q4 5.500 0 11" />
      </svg>
      <div className="ml-[6px] flex w-[60px] flex-col items-center text-[12px] leading-[18px]">
        <Fit w={27}>21:01</Fit>
        <Fit w={59}>01/06/2024</Fit>
      </div>
      <svg viewBox="0 0 18 18" className="ml-[17px] size-[18px]">
        <path d="M1 1h16v12h-4l-3 4v-4H1z" fill="#111" /><path d="M4 4.500h10M4 7h10M4 9.500h6" stroke="#ddd" />
        <circle cx="14" cy="13" r="3.500" fill="#d8d8d8" /><path d="M15.500 10a3.500 3.500 0 1 0 1 5 3 3 0 0 1-1-5z" fill="#111" />
      </svg>
      <span className="ml-[18px] h-10 w-px bg-[#aaa]" />
      <span className="w-1" />
    </footer>
  );
}

export default function App() {
  return (
    <div className="h-[1080px] w-[1920px] overflow-hidden">
      <Chrome />
      <Page />
      <Taskbar />
    </div>
  );
}
